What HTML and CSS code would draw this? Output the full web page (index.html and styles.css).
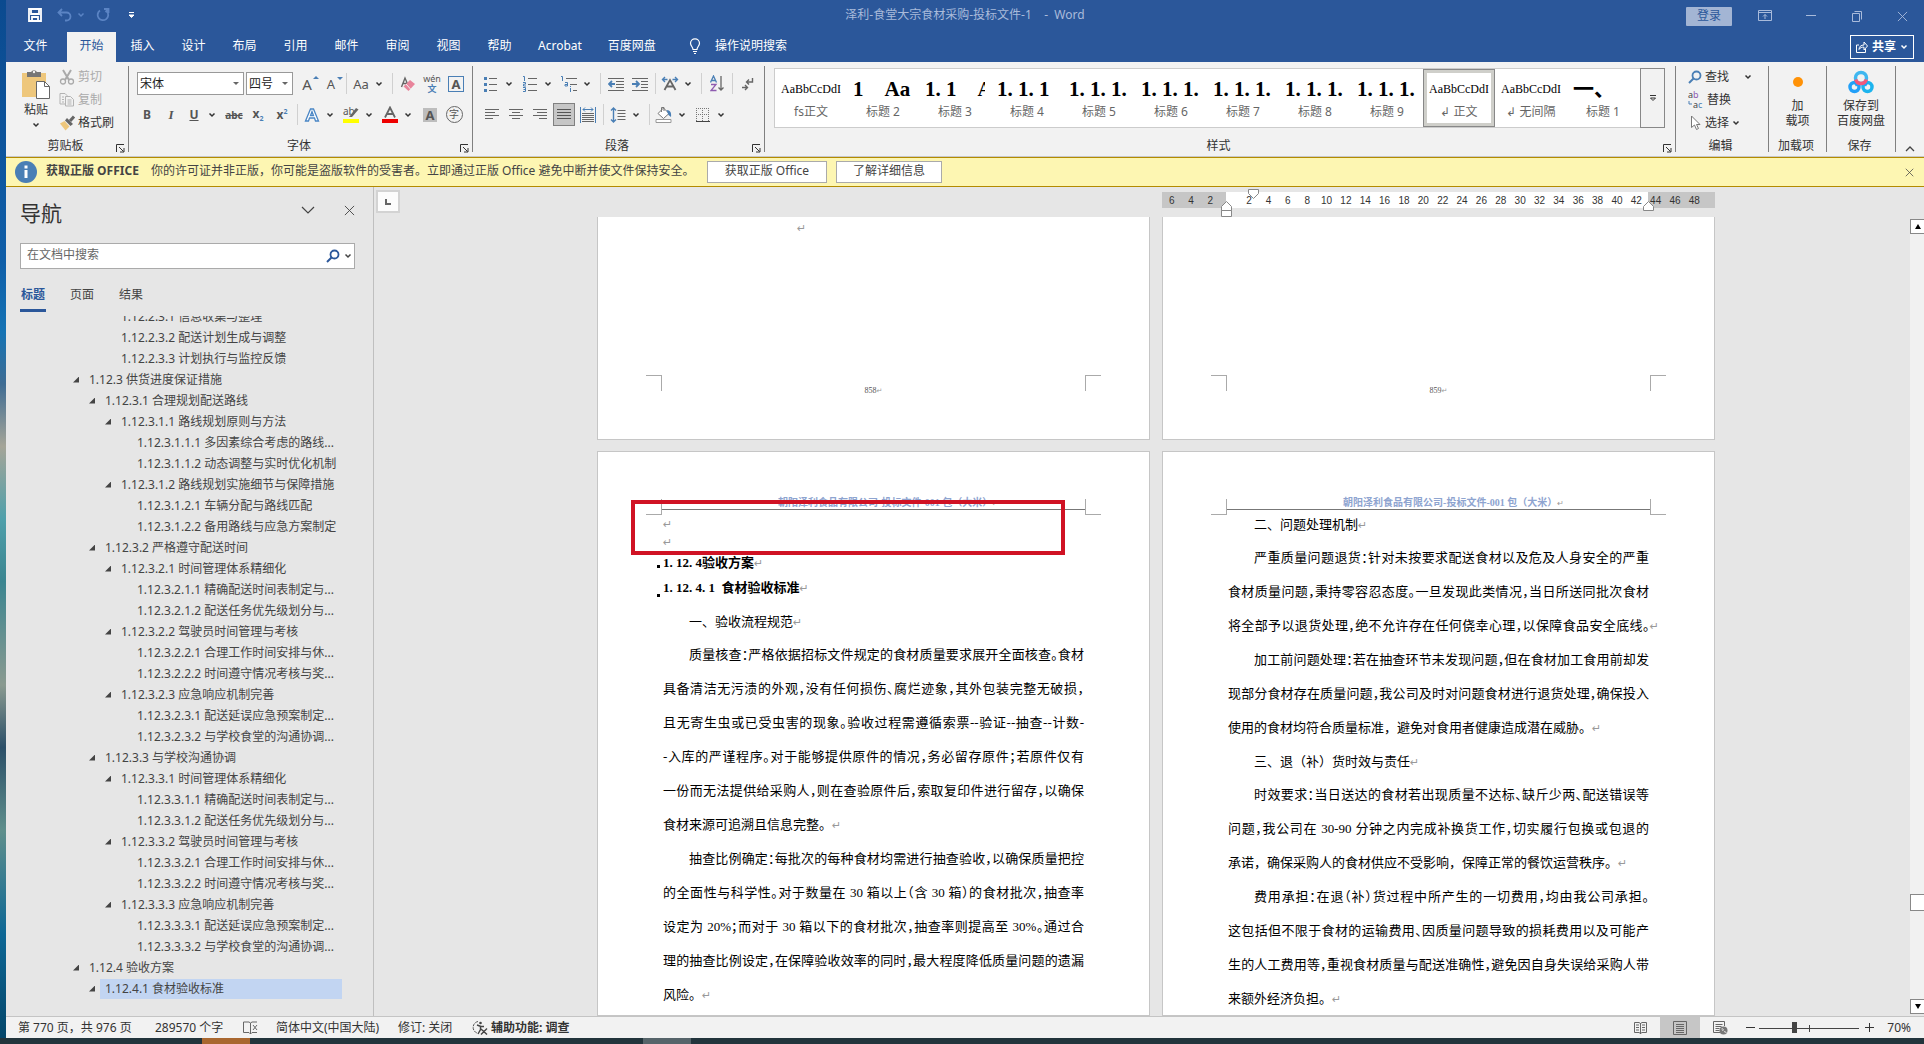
FILE: index.html
```html
<!DOCTYPE html>
<html lang="zh-CN">
<head>
<meta charset="utf-8">
<title>泽利-食堂大宗食材采购-投标文件-1 - Word</title>
<link rel="stylesheet" href="styles.css">
</head>
<body>
<svg class="defs" aria-hidden="true">
  <symbol id="chev" viewBox="0 0 8 8"><path d="M1.5 2.5 4 5l2.500-2.500" fill="none" stroke="currentColor" stroke-width="1.500"/></symbol>
  <symbol id="x" viewBox="0 0 12 12"><path d="M1 1l10 10M11 1 1 11" fill="none" stroke="currentColor"/></symbol>
  <symbol id="launch" viewBox="0 0 9 9"><path d="M.5 8V.5H8M3 3l4.500 4.500M8 4v4H4" fill="none" stroke="currentColor"/></symbol>
  <symbol id="lens" viewBox="0 0 14 14"><circle cx="8.500" cy="5.500" r="4" fill="none" stroke="currentColor" stroke-width="1.800"/><path d="M5.500 8.500 1 13" stroke="currentColor" stroke-width="2"/></symbol>
</svg>
<div class="desktop">
<div class="wallpaper"></div>
<div class="window">
  <header class="titlebar">
    <div class="quick">
      <button aria-label="保存"><svg width="14" height="14" viewBox="0 0 14 14"><path d="M1 1h12v12H1zM3 1v5h8V1M4 13V9h6v4" fill="none" stroke="#fff" stroke-width="1.800"/></svg></button>
      <button class="dim" aria-label="撤消"><svg width="15" height="14" viewBox="0 0 15 14"><path d="M5 1 1.500 4.500 5 8M2 4.500h7.500a4 4 0 0 1 0 8H8" fill="none" stroke="currentColor" stroke-width="1.800"/></svg><svg width="8" height="8"><use href="#chev"/></svg></button>
      <button class="dim redo" aria-label="重复"><svg width="14" height="14" viewBox="0 0 14 14"><path d="M8 1h4.500v4M12 1.500 9.500 4M4 2.500A5.300 5.300 0 1 0 11 3.500" fill="none" stroke="currentColor" stroke-width="1.800"/></svg></button>
      <button class="custom" aria-label="自定义"><svg width="7" height="8" viewBox="0 0 7 8"><path d="M1 1.500h5M1 4h5L3.500 6.500z" fill="#fff" stroke="#fff"/></svg></button>
    </div>
    <div class="doc-title">泽利-食堂大宗食材采购-投标文件-1 &nbsp; &nbsp;- &nbsp;Word</div>
    <div class="sys">
      <button class="login">登录</button>
      <button class="wbtn" aria-label="功能区显示选项"><svg width="14" height="12" viewBox="0 0 14 12"><path d="M.5.500h13v10H.500zM.500 2.500h13M7 9V4.500M5 6.500l2-2 2 2" fill="none" stroke="currentColor"/></svg></button>
      <button class="wbtn" aria-label="最小化"><svg width="10" height="12" viewBox="0 0 10 12"><path d="M0 5.500h10" stroke="currentColor"/></svg></button>
      <button class="wbtn" aria-label="还原"><svg width="10" height="11" viewBox="0 0 10 11"><path d="M.5 2.500h7v8h-7zM2.500.500h7v8" fill="none" stroke="currentColor"/></svg></button>
      <button class="wbtn" aria-label="关闭"><svg width="11" height="11"><use href="#x"/></svg></button>
    </div>
  </header>
  <nav class="tabs">
    <button class="file">文件</button><button class="on">开始</button><button>插入</button><button>设计</button><button>布局</button><button>引用</button><button>邮件</button><button>审阅</button><button>视图</button><button>帮助</button><button>Acrobat</button><button>百度网盘</button>
    <button class="tell"><svg width="12" height="16" viewBox="0 0 12 16"><path d="M4 11.500C4 9 1.500 8 1.500 5.300a4.500 4.500 0 0 1 9 0C10.500 8 8 9 8 11.500zM4 13.500h4M5 15.500h2" fill="none" stroke="#fff" stroke-width="1.200"/></svg>操作说明搜索</button>
    <button class="share"><svg width="12" height="12" viewBox="0 0 12 12"><path d="M3 4H.5v7.500h9V8M3 8.500c0-3 2-4.500 5-4.500M3 8.500c1-2 3-2.500 5-2.300V9l3.500-4L8 1v3" fill="none" stroke="#fff"/></svg>共享<svg width="8" height="8"><use href="#chev"/></svg></button>
  </nav>

  <section class="ribbon">
    <div class="group clip">
      <div class="tools">
        <button class="big paste"><svg width="30" height="31" viewBox="0 0 30 31"><path d="M1 4h24v24H1z" fill="#eec77c"/><path d="M6 3h4a3.500 3.500 0 0 1 6 0h4v5H6z" fill="#767676"/><circle cx="13" cy="3" r="1.200" fill="#f2f2f2"/><path d="M15.500 12.500h8l5 5v12h-13z" fill="#fff" stroke="#666"/><path d="M23.500 12.500v5h5" fill="none" stroke="#666"/></svg><span>粘贴</span><svg width="8" height="8"><use href="#chev"/></svg></button>
        <div class="stack">
          <button class="off"><svg width="16" height="16" viewBox="0 0 16 16"><path d="M4 1l6 10M12 1 6 11" stroke="#aaa" stroke-width="2"/><circle cx="4" cy="12.500" r="2.500" fill="none" stroke="#aaa" stroke-width="1.300"/><circle cx="12" cy="12.500" r="2.500" fill="none" stroke="#aaa" stroke-width="1.300"/></svg>剪切</button>
          <button class="off"><svg width="16" height="16" viewBox="0 0 16 16"><path d="M6 12H1V1.500h5l2 2V4M6.500 4.500h5l3 3V14h-8zM3 5h2M3 7.500h2M3 10h2M8.500 8h4M8.500 10h4M8.500 12h4" fill="none" stroke="#b3b3b3"/></svg>复制</button>
          <button><svg width="16" height="16" viewBox="0 0 16 16"><path d="M1 8.500 5.500 6l5 5.500-4 4z" fill="#eec77c"/><path d="M6 5.500 8 3l6 6-2.500 2z" fill="#666"/><path d="M11 6 15 1.500" stroke="#666" stroke-width="3"/></svg>格式刷</button>
        </div>
      </div>
      <div class="caption"><span>剪贴板</span><svg width="9" height="9"><use href="#launch"/></svg></div>
    </div>

    <div class="group font">
      <div class="tools col">
        <div class="line">
          <span class="combo name"><select aria-label="字体"><option>宋体</option></select></span>
          <span class="combo size"><select aria-label="字号"><option>四号</option></select></span>
          <button class="ic" aria-label="增大字号"><span class="g15">A</span><i class="up"></i></button>
          <button class="ic" aria-label="减小字号"><span class="g13">A</span><i class="down"></i></button>
          <i class="sep"></i>
          <button class="split"><span class="g13">Aa</span><svg width="8" height="8"><use href="#chev"/></svg></button>
          <i class="sep"></i>
          <button class="ic" aria-label="清除格式"><svg width="16" height="16" viewBox="0 0 16 16"><path d="M1.500 11 5 2l3 7M3 7.500h4" fill="none" stroke="#666" stroke-width="1.400"/><path d="M3.500 10.500 10 4l5 4-6.500 7z" fill="#e8849b"/><path d="M6 8l4.500 5" stroke="#f2f2f2"/></svg></button>
          <button class="ic wen" aria-label="拼音指南"><span>wén</span><b>文</b></button>
          <button class="ic" aria-label="字符边框"><span class="boxed">A</span></button>
        </div>
        <div class="line">
          <button class="ic"><b>B</b></button>
          <button class="ic"><em>I</em></button>
          <button class="split"><b class="u">U</b><svg width="8" height="8"><use href="#chev"/></svg></button>
          <button class="ic"><s>abc</s></button>
          <button class="ic"><b>x<sub>2</sub></b></button>
          <button class="ic"><b>x<sup>2</sup></b></button>
          <i class="sep"></i>
          <button class="split" aria-label="文本效果"><svg width="16" height="16" viewBox="0 0 16 16"><path d="M1.500 14 6.500 2h3l5 12h-3l-1-3H5.500l-1 3zM6.500 8.500h3L8 4.500z" fill="#fff" stroke="#4a86c5" stroke-width="1.300"/></svg><svg width="8" height="8"><use href="#chev"/></svg></button>
          <button class="split" aria-label="突出显示"><svg width="16" height="17" viewBox="0 0 16 17"><text x="0" y="9" class="tab-ab">ab</text><path d="M6 11l7-9 2.500 1.500L9 11z" fill="#666"/><path d="M0 13h16v4H0z" fill="#ff0"/></svg><svg width="8" height="8"><use href="#chev"/></svg></button>
          <button class="split" aria-label="字体颜色"><svg width="16" height="17" viewBox="0 0 16 17"><path d="M3 11.500 8 1.500l5 10M5 8h6" fill="none" stroke="#666" stroke-width="1.800"/><path d="M0 13h16v4H0z" fill="#e00"/></svg><svg width="8" height="8"><use href="#chev"/></svg></button>
          <button class="ic" aria-label="字符底纹"><span class="shade">A</span></button>
          <button class="ic" aria-label="带圈字符"><span class="ring">字</span></button>
        </div>
      </div>
      <div class="caption"><span>字体</span><svg width="9" height="9"><use href="#launch"/></svg></div>
    </div>

    <div class="group para">
      <div class="tools col">
        <div class="line">
          <button class="split" aria-label="项目符号"><svg width="14" height="16" viewBox="0 0 14 16"><path d="M5 2.500h8M5 8.500h8M5 14.500h8" stroke="#666"/><path d="M0 1h3v3H0zM0 7h3v3H0zM0 13h3v3H0z" fill="#4a7fb5"/></svg><svg width="8" height="8"><use href="#chev"/></svg></button>
          <button class="split" aria-label="编号"><svg width="14" height="16" viewBox="0 0 14 16"><path d="M5 2.500h9M5 8.500h9M5 14.500h9" stroke="#666"/><path d="M0 .500h1.500V5M0 6.500h2.500v1.700H.500V10H3M0 11.500h2.500v4H0M.500 13.500h2" fill="none" stroke="#4a7fb5"/></svg><svg width="8" height="8"><use href="#chev"/></svg></button>
          <button class="split" aria-label="多级列表"><svg width="16" height="16" viewBox="0 0 16 16"><path d="M5 2.500h11M9 8.500h7M12 14.500h4" stroke="#666"/><path d="M0 .500h1.500V5M4 6.500h2.500V10H4V8.500h2M9.500 12v4M9.500 10v1" fill="none" stroke="#4a7fb5"/></svg><svg width="8" height="8"><use href="#chev"/></svg></button>
          <i class="sep"></i>
          <button class="ic" aria-label="减少缩进"><svg width="16" height="14" viewBox="0 0 16 14"><path d="M0 1.500h16M8 4.500h8M8 7.500h8M8 10.500h8M0 13.500h16" stroke="#666"/><path d="M7 7H1.500M4 4 1 7l3 3" fill="none" stroke="#4a7fb5" stroke-width="1.800"/></svg></button>
          <button class="ic" aria-label="增加缩进"><svg width="16" height="14" viewBox="0 0 16 14"><path d="M0 1.500h16M9 4.500h7M9 7.500h7M9 10.500h7M0 13.500h16" stroke="#666"/><path d="M0 7h6M4 4l3 3-3 3" fill="none" stroke="#4a7fb5" stroke-width="1.800"/></svg></button>
          <i class="sep"></i>
          <button class="split" aria-label="中文版式"><svg width="17" height="15" viewBox="0 0 17 15"><path d="M3 14 8.500 4 14 14M5 10.500h7" fill="none" stroke="#666" stroke-width="1.800"/><path d="M6 3.500H1.500M3.500 1 1 3.500 3.500 6M11 3.500h4.500M13.500 1 16 3.500 13.500 6" fill="none" stroke="#4a7fb5" stroke-width="1.400"/></svg><svg width="8" height="8"><use href="#chev"/></svg></button>
          <i class="sep"></i>
          <button class="ic" aria-label="排序"><svg width="14" height="17" viewBox="0 0 14 17"><path d="M.500 7.500 3.500 1l3 6.500M1.500 5.500h4" fill="none" stroke="#4a7fb5" stroke-width="1.300"/><path d="M1 9.500h5l-5 6h5.500" fill="none" stroke="#8e5bb0" stroke-width="1.300"/><path d="M11 1v14M8.500 12.500 11 15l2.500-2.500" fill="none" stroke="#666" stroke-width="1.300"/></svg></button>
          <i class="sep"></i>
          <button class="ic" aria-label="显示编辑标记"><svg width="12" height="14" viewBox="0 0 12 14"><path d="M10.500 1v4H5M7 2.500 4.500 5 7 7.500M0 10.500h5M3 8l2.500 2.500L3 13" fill="none" stroke="#666" stroke-width="1.400"/></svg></button>
        </div>
        <div class="line">
          <button class="ic" aria-label="左对齐"><svg width="14" height="13" viewBox="0 0 14 13"><path d="M0 1.500h14M0 4.500h10M0 7.500h14M0 10.500h8" stroke="#666"/></svg></button>
          <button class="ic" aria-label="居中"><svg width="14" height="13" viewBox="0 0 14 13"><path d="M0 1.500h14M3 4.500h8M0 7.500h14M3 10.500h8" stroke="#666"/></svg></button>
          <button class="ic" aria-label="右对齐"><svg width="14" height="13" viewBox="0 0 14 13"><path d="M0 1.500h14M4 4.500h10M0 7.500h14M6 10.500h8" stroke="#666"/></svg></button>
          <button class="ic pressed" aria-label="两端对齐"><svg width="14" height="13" viewBox="0 0 14 13"><path d="M0 1.500h14M0 4.500h14M0 7.500h14M0 10.500h14" stroke="#555"/></svg></button>
          <button class="ic" aria-label="分散对齐"><svg width="16" height="16" viewBox="0 0 16 16"><path d="M2 6.500h12M2 8.500h12M2 10.500h12M2 12.500h12M2 14.500h12" stroke="#666"/><path d="M.500 0v16M15.500 0v16M3 2.500h10M5 .500 3 2.500l2 2M11 .500l2 2-2 2" fill="none" stroke="#4a7fb5"/></svg></button>
          <i class="sep"></i>
          <button class="split" aria-label="行距"><svg width="15" height="16" viewBox="0 0 15 16"><path d="M7 3.500h8M7 6.500h8M7 9.500h8M7 12.500h8" stroke="#666"/><path d="M3 1v14M.500 3.500 3 1l2.500 2.500M.500 12.500 3 15l2.500-2.500" fill="none" stroke="#4a7fb5" stroke-width="1.400"/></svg><svg width="8" height="8"><use href="#chev"/></svg></button>
          <i class="sep"></i>
          <button class="split" aria-label="底纹"><svg width="17" height="17" viewBox="0 0 17 17"><path d="M2.500 7.500 8 2l5.500 5.500L8 12.500zM6 6V1.500h2.500V5" fill="#fff" stroke="#777"/><path d="M11 4c4 0 5 3 4.500 7L13 9z" fill="#4a7fb5"/><path d="M.500 13.500h15v3H.500z" fill="#fff" stroke="#999"/></svg><svg width="8" height="8"><use href="#chev"/></svg></button>
          <button class="split" aria-label="边框"><svg width="14" height="14" viewBox="0 0 14 14"><path d="M.500 0v13M6.500 0v13M12.500 0v13M0 .500h13M0 6.500h13" stroke="#777" stroke-dasharray="1 1"/><path d="M0 13.500h14" stroke="#444"/></svg><svg width="8" height="8"><use href="#chev"/></svg></button>
        </div>
      </div>
      <div class="caption"><span>段落</span><svg width="9" height="9"><use href="#launch"/></svg></div>
    </div>

    <div class="group styles">
      <div class="gallery">
        <div class="items">
          <button><span class="sm">AaBbCcDdI</span>fs正文</button>
          <button><span class="lg">1 &nbsp; &nbsp;Aa</span>标题 2</button>
          <button><span class="lg">1. 1 &nbsp; &nbsp;A</span>标题 3</button>
          <button><span class="lg">1. 1. 1</span>标题 4</button>
          <button><span class="lg">1. 1. 1.</span>标题 5</button>
          <button><span class="lg">1. 1. 1.</span>标题 6</button>
          <button><span class="lg">1. 1. 1.</span>标题 7</button>
          <button><span class="lg">1. 1. 1.</span>标题 8</button>
          <button><span class="lg">1. 1. 1.</span>标题 9</button>
          <button class="sel"><span class="sm">AaBbCcDdI</span>↲ 正文</button>
          <button><span class="sm">AaBbCcDdI</span>↲ 无间隔</button>
          <button><span class="lg">一、</span>标题 1</button>
        </div>
        <button class="more" aria-label="其他样式"><svg width="8" height="8" viewBox="0 0 8 8"><path d="M1 1.500h6M1.500 4 4 6.500 6.500 4z" fill="none" stroke="#333"/></svg></button>
      </div>
      <div class="caption"><span>样式</span><svg width="9" height="9"><use href="#launch"/></svg></div>
    </div>

    <div class="group edit">
      <div class="stack">
        <button><svg class="blue" width="14" height="14"><use href="#lens"/></svg>查找<svg class="far" width="8" height="8"><use href="#chev"/></svg></button>
        <button><svg width="16" height="18" viewBox="0 0 16 18"><text x="0" y="7" class="ab">a<tspan fill="#8e5bb0">b</tspan></text><text x="5" y="17" class="ab">a<tspan fill="#4a7fb5">c</tspan></text><path d="M1 10v3h3" fill="none" stroke="#4a7fb5"/></svg>替换</button>
        <button><svg width="14" height="16" viewBox="0 0 14 16"><path d="M3.500 1v11.500l3-2.500 2 4.500 2-1-2-4h3.500z" fill="#fff" stroke="#777"/></svg>选择<svg width="8" height="8"><use href="#chev"/></svg></button>
      </div>
      <div class="caption"><span>编辑</span></div>
    </div>
    <div class="group addin">
      <button class="big"><svg width="28" height="30" viewBox="0 0 28 30"><circle cx="14" cy="14" r="5" fill="#ff9208"/></svg><span>加<br>载项</span></button>
      <div class="caption"><span>加载项</span></div>
    </div>
    <div class="group save">
      <button class="big"><svg width="28" height="30" viewBox="0 0 28 30"><g fill="none" stroke-width="3.500"><circle cx="14" cy="10" r="5.500" stroke="#3fb7f0"/><circle cx="7.500" cy="19" r="4.500" stroke="#22a0f8"/><circle cx="20.500" cy="19" r="4.500" stroke="#1cb4ee"/><path d="M11 15l-3 2M17 15l3 2" stroke="#22a0f8"/><path d="M8.700 11.500a5.500 5.500 0 0 0 10.600 0" stroke="#f4597a"/></g></svg><span>保存到<br>百度网盘</span></button>
      <div class="caption"><span>保存</span></div>
    </div>
    <button class="collapse" aria-label="折叠功能区"><svg width="10" height="7" viewBox="0 0 10 7"><path d="M1 6l4-4 4 4" fill="none" stroke="#444" stroke-width="1.300"/></svg></button>
  </section>

  <section class="notice">
    <svg width="22" height="22" viewBox="0 0 22 22"><circle cx="11" cy="11" r="11" fill="#4a7fb5"/><path d="M9.500 9h3v8h-3zM9.500 4.500h3v3h-3z" fill="#fff"/></svg>
    <strong>获取正版 OFFICE</strong>
    <span class="msg">你的许可证并非正版，你可能是盗版软件的受害者。立即通过正版 Office 避免中断并使文件保持安全。</span>
    <button class="act">获取正版 Office</button>
    <button class="act second">了解详细信息</button>
    <button class="shut" aria-label="关闭"><svg width="9" height="9"><use href="#x"/></svg></button>
  </section>

  <main class="work">
    <aside class="nav">
      <div class="nav-head"><h2>导航</h2><button aria-label="选项"><svg width="14" height="8" viewBox="0 0 14 8"><path d="M1 1l6 6 6-6" fill="none" stroke="#444" stroke-width="1.200"/></svg></button><button aria-label="关闭"><svg width="11" height="11"><use href="#x"/></svg></button></div>
      <div class="search"><input type="text" aria-label="在文档中搜索" placeholder="在文档中搜索"><svg class="navy" width="14" height="14"><use href="#lens"/></svg><svg width="8" height="8"><use href="#chev"/></svg></div>
      <div class="nav-tabs"><button class="on">标题</button><button>页面</button><button>结果</button></div>
      <div class="tree-clip"><ul class="tree">
        <li class="l5"><span>1.12.2.3.1 信息收集与整理</span></li>
        <li class="l5"><span>1.12.2.3.2 配送计划生成与调整</span></li>
        <li class="l5"><span>1.12.2.3.3 计划执行与监控反馈</span></li>
        <li class="l3 open"><span>1.12.3 供货进度保证措施</span></li>
        <li class="l4 open"><span>1.12.3.1 合理规划配送路线</span></li>
        <li class="l5 open"><span>1.12.3.1.1 路线规划原则与方法</span></li>
        <li class="l6"><span>1.12.3.1.1.1 多因素综合考虑的路线...</span></li>
        <li class="l6"><span>1.12.3.1.1.2 动态调整与实时优化机制</span></li>
        <li class="l5 open"><span>1.12.3.1.2 路线规划实施细节与保障措施</span></li>
        <li class="l6"><span>1.12.3.1.2.1 车辆分配与路线匹配</span></li>
        <li class="l6"><span>1.12.3.1.2.2 备用路线与应急方案制定</span></li>
        <li class="l4 open"><span>1.12.3.2 严格遵守配送时间</span></li>
        <li class="l5 open"><span>1.12.3.2.1 时间管理体系精细化</span></li>
        <li class="l6"><span>1.12.3.2.1.1 精确配送时间表制定与...</span></li>
        <li class="l6"><span>1.12.3.2.1.2 配送任务优先级划分与...</span></li>
        <li class="l5 open"><span>1.12.3.2.2 驾驶员时间管理与考核</span></li>
        <li class="l6"><span>1.12.3.2.2.1 合理工作时间安排与休...</span></li>
        <li class="l6"><span>1.12.3.2.2.2 时间遵守情况考核与奖...</span></li>
        <li class="l5 open"><span>1.12.3.2.3 应急响应机制完善</span></li>
        <li class="l6"><span>1.12.3.2.3.1 配送延误应急预案制定...</span></li>
        <li class="l6"><span>1.12.3.2.3.2 与学校食堂的沟通协调...</span></li>
        <li class="l4 open"><span>1.12.3.3 与学校沟通协调</span></li>
        <li class="l5 open"><span>1.12.3.3.1 时间管理体系精细化</span></li>
        <li class="l6"><span>1.12.3.3.1.1 精确配送时间表制定与...</span></li>
        <li class="l6"><span>1.12.3.3.1.2 配送任务优先级划分与...</span></li>
        <li class="l5 open"><span>1.12.3.3.2 驾驶员时间管理与考核</span></li>
        <li class="l6"><span>1.12.3.3.2.1 合理工作时间安排与休...</span></li>
        <li class="l6"><span>1.12.3.3.2.2 时间遵守情况考核与奖...</span></li>
        <li class="l5 open"><span>1.12.3.3.3 应急响应机制完善</span></li>
        <li class="l6"><span>1.12.3.3.3.1 配送延误应急预案制定...</span></li>
        <li class="l6"><span>1.12.3.3.3.2 与学校食堂的沟通协调...</span></li>
        <li class="l3 open"><span>1.12.4 验收方案</span></li>
        <li class="l4 open sel"><span>1.12.4.1 食材验收标准</span></li>
      </ul></div>
    </aside>
    <div class="tabstop"><button aria-label="制表符"><svg width="6" height="6" viewBox="0 0 6 6"><path d="M1 0v5h5" fill="none" stroke="#666" stroke-width="2"/></svg></button></div>
    <div class="canvas">
      <div class="spread ruler-row">
        <div class="blank"></div>
        <div class="ruler">
          <span>6</span><span>4</span><span>2</span><span></span><span>2</span><span>4</span><span>6</span><span>8</span><span>10</span><span>12</span><span>14</span><span>16</span><span>18</span><span>20</span><span>22</span><span>24</span><span>26</span><span>28</span><span>30</span><span>32</span><span>34</span><span>36</span><span>38</span><span>40</span><span>42</span><span>44</span><span>46</span><span>48</span>
          <svg class="mark first" width="11" height="10" viewBox="0 0 11 10"><path d="M.500.500h10v4l-5 5-5-5z" fill="#fff" stroke="#888"/></svg>
          <svg class="mark left" width="11" height="16" viewBox="0 0 11 16"><path d="M.500 9.500v-4l5-5 5 5v4zM.500 9.500h10v6H.500z" fill="#fff" stroke="#888"/></svg>
          <svg class="mark right" width="11" height="10" viewBox="0 0 11 10"><path d="M.500 9.500v-4l5-5 5 5v4z" fill="#fff" stroke="#888"/></svg>
        </div>
      </div>
      <div class="spread">
        <article class="page tail"><p class="lone"><i class="pm">↵</i></p><div class="foot"><i class="corner"></i><span>858<i class="pm">↵</i></span><i class="corner r"></i></div></article>
        <article class="page tail"><p class="lone"></p><div class="foot"><i class="corner"></i><span>859<i class="pm">↵</i></span><i class="corner r"></i></div></article>
      </div>
      <div class="spread grow">
        <article class="page">
          <div class="head"><i class="corner"></i><span>朝阳泽利食品有限公司-投标文件-001 包（大米）<i class="pm">↵</i></span><i class="corner r"></i></div>
          <div class="body">
            <p class="empty"><i class="pm">↵</i></p><p class="empty"><i class="pm">↵</i></p>
            <h3>1. 12. 4验收方案<i class="pm">↵</i></h3>
            <h4>1. 12. 4. 1 &nbsp;食材验收标准<i class="pm">↵</i></h4>
            <p class="sub">一、验收流程规范<i class="pm">↵</i></p>
            <p class="in j">质量核查：严格依据招标文件规定的食材质量要求展开全面核查。食材</p>
            <p class="j">具备清洁无污渍的外观，没有任何损伤、腐烂迹象，其外包装完整无破损，</p>
            <p class="j">且无寄生虫或已受虫害的现象。验收过程需遵循索票--验证--抽查--计数-</p>
            <p class="j">-入库的严谨程序。对于能够提供原件的情况，务必留存原件；若原件仅有</p>
            <p class="j">一份而无法提供给采购人，则在查验原件后，索取复印件进行留存，以确保</p>
            <p>食材来源可追溯且信息完整。<i class="pm">↵</i></p>
            <p class="in j">抽查比例确定：每批次的每种食材均需进行抽查验收，以确保质量把控</p>
            <p class="j">的全面性与科学性。对于数量在 30 箱以上（含 30 箱）的食材批次，抽查率</p>
            <p class="j">设定为 20%；而对于 30 箱以下的食材批次，抽查率则提高至 30%。通过合</p>
            <p class="j">理的抽查比例设定，在保障验收效率的同时，最大程度降低质量问题的遗漏</p>
            <p>风险。<i class="pm">↵</i></p>
          </div>
          <div class="redbox"></div>
        </article>
        <article class="page">
          <div class="head"><i class="corner"></i><span>朝阳泽利食品有限公司-投标文件-001 包（大米）<i class="pm">↵</i></span><i class="corner r"></i></div>
          <div class="body cont">
            <p class="sub">二、问题处理机制<i class="pm">↵</i></p>
            <p class="in j">严重质量问题退货：针对未按要求配送食材以及危及人身安全的严重</p>
            <p class="j">食材质量问题，秉持零容忍态度。一旦发现此类情况，当日所送同批次食材</p>
            <p class="j hang">将全部予以退货处理，绝不允许存在任何侥幸心理，以保障食品安全底线。<i class="pm">↵</i></p>
            <p class="in j">加工前问题处理：若在抽查环节未发现问题，但在食材加工食用前却发</p>
            <p class="j">现部分食材存在质量问题，我公司及时对问题食材进行退货处理，确保投入</p>
            <p>使用的食材均符合质量标准，避免对食用者健康造成潜在威胁。<i class="pm">↵</i></p>
            <p class="sub">三、退（补）货时效与责任<i class="pm">↵</i></p>
            <p class="in j">时效要求：当日送达的食材若出现质量不达标、缺斤少两、配送错误等</p>
            <p class="j">问题，我公司在 30-90 分钟之内完成补换货工作，切实履行包换或包退的</p>
            <p>承诺，确保采购人的食材供应不受影响，保障正常的餐饮运营秩序。<i class="pm">↵</i></p>
            <p class="in j">费用承担：在退（补）货过程中所产生的一切费用，均由我公司承担。</p>
            <p class="j">这包括但不限于食材的运输费用、因质量问题导致的损耗费用以及可能产</p>
            <p class="j">生的人工费用等，重视食材质量与配送准确性，避免因自身失误给采购人带</p>
            <p>来额外经济负担。<i class="pm">↵</i></p>
          </div>
        </article>
      </div>
    </div>
    <div class="scroll">
      <button aria-label="向上"><svg width="6" height="5" viewBox="0 0 6 5"><path d="M3 0l3 5H0z"/></svg></button>
      <i class="thumb"></i>
      <button aria-label="向下"><svg width="6" height="5" viewBox="0 0 6 5"><path d="M0 0h6L3 5z"/></svg></button>
    </div>
  </main>

  <footer class="status">
    <span class="pages">第 770 页，共 976 页</span>
    <span class="words">289570 个字</span>
    <svg class="proof" width="15" height="14" viewBox="0 0 15 14"><path d="M7.500 2v11M7.500 2 6 1H.500v10.500H6l1.500 1.500M7.500 2 9 1h5M7.500 13 9 11.500h5M10 4l4 5M14 4l-4 5" fill="none" stroke="#666"/></svg>
    <span class="lang">简体中文(中国大陆)</span>
    <span class="track">修订: 关闭</span>
    <svg width="16" height="15" viewBox="0 0 16 15"><path d="M6 1.500A6 6 0 0 0 5 13" fill="none" stroke="#555" stroke-dasharray="3 1"/><circle cx="8.500" cy="3" r="1.300" fill="#444"/><path d="M5 5l4 1.500h3M8.500 6.500v3L6 14M9 9l6 5.500M15 8.500 9 14.500" fill="none" stroke="#444" stroke-width="1.400"/></svg>
    <span class="acc">辅助功能: 调查</span>
    <div class="views">
      <button aria-label="阅读视图"><svg width="13" height="14" viewBox="0 0 13 14"><path d="M6.500 2v11M.500 1.500H5l1.500 1L8 1.500h4.500v10H8l-1.500 1-1.500-1H.500zM2 4h3M2 6.500h3M2 9h3M8 4h3M8 6.500h3M8 9h3" fill="none" stroke="#666"/></svg></button>
      <button class="on" aria-label="页面视图"><svg width="14" height="14" viewBox="0 0 14 14"><path d="M.500.500h13v13H.500zM3 3.500h8M3 5.500h8M3 7.500h8M3 9.500h8M3 11.500h8" fill="none" stroke="#666"/></svg></button>
      <button aria-label="Web 视图"><svg width="15" height="14" viewBox="0 0 15 14"><path d="M7 11.500H.500V.500h11V5M2.500 3.500h7M2.500 5.500h6M2.500 7.500h4M2.500 9.500h4" fill="none" stroke="#666"/><circle cx="10.500" cy="9.500" r="4" fill="#777"/><path d="M8.500 8c2-1 2 1 1 2M11 11c1-1 2 0 2 1" fill="none" stroke="#f2f2f2"/></svg></button>
    </div>
    <button class="zm" aria-label="缩小"><svg width="9" height="9" viewBox="0 0 9 9"><path d="M0 4.500h9" stroke="#333"/></svg></button>
    <input class="zoom" type="range" min="0" max="100" value="34" aria-label="缩放">
    <button class="zm" aria-label="放大"><svg width="9" height="9" viewBox="0 0 9 9"><path d="M0 4.500h9M4.500 0v9" stroke="#333"/></svg></button>
    <span class="pct">70%</span>
  </footer>
</div>
<div class="taskbar"></div>
</div>
</body>
</html>
```
FILE: styles.css
```css
* { box-sizing: border-box; }
body {
  margin: 0;
  font: 12px/16px "Noto Sans", "Noto Sans CJK SC", sans-serif;
  color: #333;
  overflow: hidden;
}
button, select, input {
  font: inherit;
  color: inherit;
  border: 0;
  padding: 0;
  margin: 0;
  background: none;
  white-space: nowrap;
}
button { display: flex; align-items: center; justify-content: center; flex: none; }
svg { display: block; flex: none; }
i { font-style: normal; }
p, h2, h3, h4, ul { margin: 0; padding: 0; }
.defs { position: absolute; width: 0; height: 0; }

.desktop {
  display: grid;
  grid-template: minmax(0, 1fr) 6px / 6px minmax(0, 1fr);
  height: 100vh;
}
.wallpaper {
  background: linear-gradient(#0b4a8f 0, #0f5ea8 25%, #1573b4 32%, #3f6c93 37%, #a5a598 43%, #4fa0ab 50%, #3b8590 56%, #8a9a90 66%, #2b4f68 72%, #5f8f8c 80%, #0d6795 90%, #04466a 100%);
}
.window { display: flex; flex-direction: column; min-width: 0; background: #e6e6e6; }
.taskbar {
  grid-column: 1 / -1;
  background: linear-gradient(90deg, transparent 202px, #a9672f 202px 250px, transparent 250px 643px, #56646a 643px 691px, transparent 691px), #22343c;
}

/* title bar and tabs */
.titlebar {
  display: grid;
  grid-template-columns: 1fr auto 1fr;
  align-items: center;
  height: 32px;
  flex: none;
  background: #2b579a;
  color: #a9bbdb;
}
.quick { display: flex; align-items: center; padding: 0 0 2px 22px; }
.quick .dim { color: #5b84c4; gap: 5px; margin-left: 15px; }
.quick .redo { margin-left: 11px; }
.quick .custom { margin-left: 18px; }
.doc-title { padding-bottom: 2px; white-space: nowrap; }
.sys { display: flex; justify-content: flex-end; height: 26px; }
.login { align-self: center; width: 46px; height: 19px; margin: 0 10px 0 0; background: #a3b5d4; color: #2b579a; border-radius: 1px; }
.wbtn { width: 46px; }
.wbtn:last-child { width: 44px; }

.tabs { display: flex; height: 30px; flex: none; background: #2b579a; color: #fff; gap: 2px; padding: 0 10px 0 5px; }
.tabs button { min-width: 49px; padding: 0 12px 2px; }
.tabs .file { margin-right: 5px; }
.tabs .on { background: #f2f2f2; color: #2b579a; }
.tabs .tell { gap: 14px; margin-left: 7px; }
.tabs .share { margin: 3px 0 3px auto; width: 64px; border: 1px solid #fff; padding: 0; gap: 4px; font-weight: bold; }

/* ribbon */
.ribbon { display: flex; height: 95px; flex: none; background: #f2f2f2; border-bottom: 1px solid #c8c8c8; padding: 4px 0; }
.group { display: flex; flex-direction: column; flex: none; border-right: 1px solid #808080; }
.clip { width: 123px; }
.font { width: 344px; }
.para { width: 292px; }
.styles { flex: 1 1 0; min-width: 0; }
.edit { width: 93px; }
.addin { width: 58px; }
.save { width: 69px; }
.caption { display: grid; grid-template-columns: 1fr auto 1fr; align-items: center; height: 14px; margin-top: auto; padding-right: 3px; }
.caption span { grid-column: 2; }
.caption svg { justify-self: end; margin-top: 4px; }
.tools { display: flex; }
.col { flex-direction: column; gap: 8px; padding: 6px 0 0 7px; }
.font .col { padding-left: 6px; }
.line { display: flex; align-items: center; height: 23px; }
.big { flex-direction: column; justify-content: flex-start; line-height: 15px; }
.paste { width: 50px; padding: 3px 0 0 10px; }
.paste span { margin: 2px 0 4px; }
.big svg { margin: 0 auto; }
.addin .big svg, .save .big svg { margin-top: 2px; }
.stack { display: flex; flex-direction: column; align-items: flex-start; }
.stack button { height: 23px; gap: 3px; padding-bottom: 2px; }
.clip .stack { padding-left: 3px; }
.edit .stack { padding-left: 12px; }
.stack .far { margin-left: 12px; }
.off { color: #aaa; }
.blue { color: #4a7fb5; }
.ic, .split { color: #555; height: 22px; }
.ic { position: relative; width: 24px; }
.split { width: 39px; padding-right: 6px; justify-content: space-between; }
.split > :first-child { width: 22px; text-align: center; }
.split svg:last-child { width: 8px; margin-right: 0; color: #333; }
.sep { width: 1px; height: 21px; margin: 0 3px; background: #d0d0d0; }
.combo { position: relative; height: 23px; border: 1px solid #999; background: #fff; margin-right: 2px; }
.combo select { width: 100%; height: 21px; padding-left: 2px; appearance: none; color: #222; }
.combo::after { content: ""; position: absolute; right: 4px; top: 9px; border: 3px solid transparent; border-top-color: #666; }
.name { width: 107px; margin-left: 2px; }
.size { width: 47px; }
.g15 { font-size: 15px; }
.g13 { font-size: 13px; }
.up, .down { position: absolute; right: 0; top: 2px; border: 3px solid transparent; }
.up { top: 0; border-bottom-color: #4a7fb5; }
.down { top: 4px; border-top-color: #4a7fb5; }
.wen { flex-direction: column; font-size: 9px; line-height: 10px; }
.wen b { font-size: 9px; color: #4a7fb5; }
.boxed { width: 16px; height: 16px; border: 1px solid #4a7fb5; font: bold 13px/14px "Noto Sans", sans-serif; }
.shade { width: 14px; height: 14px; background: #bdbdbd; font: bold 13px/14px "Noto Sans", sans-serif; }
.ring { width: 17px; height: 17px; border: 1px solid #666; border-radius: 50%; font-size: 10px; line-height: 14px; }
.ic em { font: italic bold 13px "Liberation Serif", serif; }
.u { text-decoration: underline; }
.ic s { font-size: 10px; font-weight: bold; }
.ic sub, .ic sup { font-size: 7px; line-height: 1; color: #4a7fb5; }
.tab-ab { font-size: 10px; fill: #555; }
.ab { font-size: 9px; fill: #444; }
.pressed { width: 22px; height: 23px; margin: 0 1px; background: #c6c6c6; border: 1px solid #808080; }

.gallery { display: flex; height: 60px; margin: 2px 10px 0 9px; border: 1px solid #ccc; background: #fff; }
.items { display: flex; flex: 1; min-width: 0; overflow: hidden; }
.items button { flex-direction: column; width: 72px; color: #666; padding-top: 1px; }
.items button > span { display: flex; align-items: center; height: 26px; width: 60px; overflow: hidden; color: #000; font-family: "Liberation Serif", "Noto Sans CJK SC", serif; }
.items .sm { font-size: 12px; margin-top: -2px; margin-bottom: 2px; }
.items .lg { font-size: 21px; font-weight: bold; line-height: 26px; margin-top: -2px; margin-bottom: 2px; }
.items .sel { outline: 3px solid #cfcfca; outline-offset: -4px; border: 1px solid #888; }
.more { width: 25px; border: 1px solid #888; background: #f2f2f2; margin: -1px; }
.collapse { flex: 1 0 28px; align-items: flex-end; max-width: 28px; }

/* licence bar */
.notice { display: flex; align-items: center; height: 30px; flex: none; padding: 0 10px 0 9px; background: #fdf6b2; border: solid #b38b00; border-width: 1px 0; color: #444; white-space: nowrap; }
.notice strong { margin: 0 12px 2px 9px; }
.msg { margin-bottom: 2px; width: 556px; }
.act { width: 120px; height: 22px; background: #fff; border: 1px solid #aaa; padding-bottom: 2px; margin-bottom: 1px; }
.second { width: 106px; margin-left: 9px; }
.shut { margin-left: auto; }

/* navigation pane */
.work { display: flex; flex: 1; min-height: 0; overflow: hidden; }
.nav { width: 368px; flex: none; display: flex; flex-direction: column; border-right: 1px solid #bfbfbf; padding: 0 18px 0 14px; color: #444; }
.nav-head { display: flex; align-items: center; height: 56px; padding-bottom: 4px; }
.nav-head h2 { flex: 1; font-size: 21px; font-weight: normal; line-height: 28px; color: #333; }
.nav-head button { margin: 0 0 6px 29px; }
.search { display: flex; align-items: center; height: 26px; background: #fff; border: 1px solid #aaa; padding-right: 2px; gap: 4px; }
.search input { flex: 1; min-width: 0; padding: 0 6px 2px; outline: 0; }
.search input::placeholder { color: #666; }
.navy { color: #2b579a; }
.nav-tabs { display: flex; gap: 23px; margin-top: 14px; height: 29px; }
.nav-tabs button { width: 26px; border-bottom: 3px solid transparent; padding-bottom: 2px; }
.nav-tabs .on { border-color: #2b579a; color: #2b579a; font-weight: bold; }
.tree-clip { flex: 1; min-height: 0; overflow: hidden; margin-top: 4px; }
.tree { list-style: none; margin-top: -10px; }
.tree li { display: flex; align-items: center; height: 21px; line-height: 20px; white-space: nowrap; padding-right: 13px; }
.tree li::before { content: ""; width: 6px; height: 6px; margin-right: 5px; flex: none; }
.tree .open::before { background: #444; clip-path: polygon(100% 0, 100% 100%, 0 100%); }
.tree span { flex: 1; padding-left: 5px; }
.tree .sel span { background: #c2d5f2; }
.l3 { padding-left: 53px; }
.l4 { padding-left: 69px; }
.l5 { padding-left: 85px; }
.l6 { padding-left: 101px; }

/* document canvas */
.tabstop { width: 28px; flex: none; padding: 3px 0 0 2px; }
.tabstop button { width: 24px; height: 23px; background: #fcfcfc; border: 2px solid #d3d3d3; }
.canvas { flex: 1; min-width: 0; display: flex; flex-direction: column; }
.spread { display: flex; justify-content: center; gap: 12px; flex: none; }
.grow { flex: 1; min-height: 0; margin-top: 11px; }
.ruler-row { height: 30px; padding-top: 5px; }
.blank, .ruler, .page { width: 553px; flex: none; }
.ruler { position: relative; display: flex; height: 16px; padding-right: 11px; background: linear-gradient(90deg, #c6c6c6 64px, #fff 64px 486px, #c6c6c6 486px); font: 10px/17px "Liberation Sans", sans-serif; }
.ruler span { flex: 1 1 0; text-align: center; }
.mark { position: absolute; }
.first { left: 86px; top: -3px; }
.left { left: 59px; top: 9px; }
.right { left: 481px; top: 9px; }
.page { position: relative; background: #fff; border: 1px solid #c6c6c6; color: #000; font: 13px/34px "Liberation Serif", "Noto Sans CJK SC", serif; }
.tail { height: 223px; border-top: 0; }
.pm { color: #999; font: 11px/1 "DejaVu Sans", sans-serif; }
.lone { height: 158px; padding: 5px 0 0 199px; line-height: 12px; }
.head, .foot { display: flex; padding: 0 48px; font-size: 8px; color: #555; }
.corner { width: 16px; height: 16px; border: solid #aaa; border-width: 1px 1px 0 0; }
.corner.r { border-width: 1px 0 0 1px; }
.foot span { flex: 1; text-align: center; line-height: 31px; }
.foot .pm { font-size: 7px; }
.head { padding-top: 43px; align-items: flex-end; }
.head .corner { border-width: 0 1px 1px 0; }
.head .corner.r { border-width: 0 0 1px 1px; }
.head span { flex: 1; align-self: flex-start; height: 15px; padding-left: 30px; border-bottom: 1px solid #777; text-align: center; color: #8ea4d0; font-size: 10px; font-weight: bold; line-height: 15px; margin-bottom: 5px; white-space: nowrap; }
.head .pm { font-size: 8px; }
.body { padding: 0 65px; white-space: nowrap; }
.body .empty { line-height: 18px; }
.body h3 { font-size: 13px; line-height: 23px; }
.body h4 { font-size: 13px; line-height: 27px; margin-bottom: 4px; }
.body h3::before, .body h4::before { content: ""; float: left; width: 3px; height: 3px; margin: 14px 0 0 -6px; background: #000; }
.body h4::before { margin-top: 20px; }
.body .sub { line-height: 33px; padding-left: 26px; }
.body .in { padding-left: 26px; }
.body .j { text-align: justify; text-align-last: justify; font-feature-settings: "halt"; white-space: normal; height: 34px; }
.body .hang { margin-right: -10px; }
.cont { margin-top: -7px; }
.redbox { position: absolute; left: 33px; top: 48px; width: 434px; height: 55px; border: 4px solid #d01224; }

/* scroll bar */
.scroll { width: 14px; flex: none; margin: 32px 0 2px; display: flex; flex-direction: column; background: #f1f1f1; }
.scroll button { height: 15px; background: #fff; border: 1px solid #888; border-right: 0; }
.thumb { height: 17px; margin: auto 0 88px; background: #fff; border: 1px solid #888; border-right: 0; }

/* status bar */
.status { display: flex; align-items: center; height: 22px; flex: none; padding: 0 13px 0 12px; background: #f2f2f2; border-top: 1px solid #c4c4c4; white-space: nowrap; }
.pages { width: 137px; }
.words { width: 88px; }
.lang { width: 122px; margin-left: 18px; }
.track { width: 74px; }
.acc { font-weight: bold; margin-left: 3px; }
.views { display: flex; align-self: stretch; margin-left: auto; }
.views button { width: 40px; }
.views .on { background: #c6c6c6; }
.zm { width: 10px; margin-left: 5px; }
.zoom { width: 100px; height: 12px; margin-left: 4px; appearance: none; background: linear-gradient(#444, #444) 0 6px / 100% 1px no-repeat, linear-gradient(#444, #444) 50% 3px / 1px 7px no-repeat; }
.zoom::-webkit-slider-thumb { appearance: none; width: 5px; height: 11px; background: #444; }
.pct { margin-left: 13px; }
```
